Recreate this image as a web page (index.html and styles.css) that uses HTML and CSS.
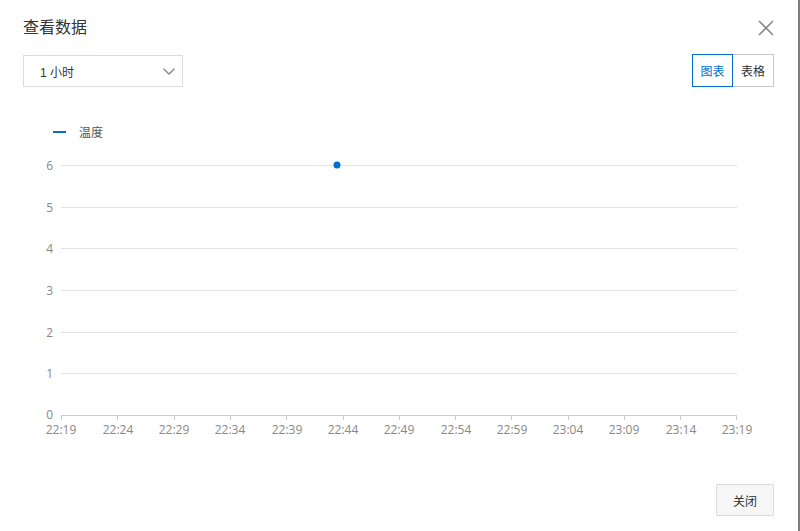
FILE: index.html
```html
<!DOCTYPE html>
<html lang="zh-CN">
<head>
<meta charset="utf-8">
<title>查看数据</title>
<link rel="stylesheet" href="styles.css">
</head>
<body>
<div class="dialog">
  <div class="header">
    <h1 class="title">查看数据</h1>
    <button class="close" aria-label="关闭">
      <svg width="16" height="16" viewBox="0 0 16 16"><path d="M1 1L15 15M15 1L1 15" stroke="#8a8a8a" stroke-width="1.6" fill="none"/></svg>
    </button>
  </div>
  <div class="toolbar">
    <div class="select">
      <span class="select-text">1 小时</span>
      <svg class="chev" width="12" height="7" viewBox="0 0 12 7"><path d="M0.5 0.8L6 6L11.5 0.8" stroke="#888" stroke-width="1.3" fill="none"/></svg>
    </div>
    <div class="toggle">
      <button class="tg active">图表</button>
      <button class="tg">表格</button>
    </div>
  </div>
  <div class="chart">
    <svg width="797" height="345" viewBox="0 0 797 345">
      <g class="legend">
        <line x1="53" y1="32" x2="66" y2="32" stroke="#0070cc" stroke-width="2"/>
        <text x="79" y="31" class="legend-text">温度</text>
      </g>
      <g class="grid" stroke="#e3e3e3" stroke-width="1">
        <line x1="61" y1="65.5" x2="737" y2="65.5"/>
        <line x1="61" y1="107.5" x2="737" y2="107.5"/>
        <line x1="61" y1="148.5" x2="737" y2="148.5"/>
        <line x1="61" y1="190.5" x2="737" y2="190.5"/>
        <line x1="61" y1="232.5" x2="737" y2="232.5"/>
        <line x1="61" y1="273.5" x2="737" y2="273.5"/>
      </g>
      <g class="ylabels">
        <text x="53" y="65">6</text>
        <text x="53" y="107">5</text>
        <text x="53" y="148">4</text>
        <text x="53" y="190">3</text>
        <text x="53" y="232">2</text>
        <text x="53" y="273">1</text>
        <text x="53" y="314">0</text>
      </g>
      <g class="axis" stroke="#cccccc" stroke-width="1">
        <line x1="61" y1="315.5" x2="737" y2="315.5"/>
        <line x1="61.5" y1="315" x2="61.5" y2="320"/>
        <line x1="117.5" y1="315" x2="117.5" y2="320"/>
        <line x1="174.5" y1="315" x2="174.5" y2="320"/>
        <line x1="230.5" y1="315" x2="230.5" y2="320"/>
        <line x1="286.5" y1="315" x2="286.5" y2="320"/>
        <line x1="343.5" y1="315" x2="343.5" y2="320"/>
        <line x1="399.5" y1="315" x2="399.5" y2="320"/>
        <line x1="455.5" y1="315" x2="455.5" y2="320"/>
        <line x1="511.5" y1="315" x2="511.5" y2="320"/>
        <line x1="568.5" y1="315" x2="568.5" y2="320"/>
        <line x1="624.5" y1="315" x2="624.5" y2="320"/>
        <line x1="680.5" y1="315" x2="680.5" y2="320"/>
        <line x1="736.5" y1="315" x2="736.5" y2="320"/>
      </g>
      <g class="xlabels">
        <text x="61" y="329">22:19</text>
        <text x="118" y="329">22:24</text>
        <text x="174" y="329">22:29</text>
        <text x="230" y="329">22:34</text>
        <text x="287" y="329">22:39</text>
        <text x="343" y="329">22:44</text>
        <text x="399" y="329">22:49</text>
        <text x="456" y="329">22:54</text>
        <text x="512" y="329">22:59</text>
        <text x="568" y="329">23:04</text>
        <text x="624" y="329">23:09</text>
        <text x="681" y="329">23:14</text>
        <text x="737" y="329">23:19</text>
      </g>
      <circle cx="337" cy="65" r="3.5" fill="#0070cc"/>
    </svg>
  </div>
  <div class="footer">
    <button class="btn">关闭</button>
  </div>
</div>
</body>
</html>
```
FILE: styles.css
```css
html, body {
  margin: 0;
  padding: 0;
  background: #ffffff;
}
body {
  font-family: "Liberation Sans", "Noto Sans CJK SC", sans-serif;
  color: #333;
}
.dialog {
  width: 800px;
  height: 531px;
  box-sizing: border-box;
  border-right: 2px solid #7d7d7d;
  display: flex;
  flex-direction: column;
  background: #fff;
}
.header {
  display: flex;
  justify-content: space-between;
  align-items: center;
  padding: 13px 24px 0 23px;
  height: 26px;
}
.title {
  margin: 0;
  font-size: 16px;
  font-weight: normal;
  line-height: 24px;
  color: #333;
  font-family: "Noto Sans CJK SC", sans-serif;
}
.close {
  border: 0;
  background: none;
  padding: 0;
  width: 16px;
  height: 16px;
  margin-top: 3px;
  cursor: pointer;
}
.close svg { display: block; }
.toolbar {
  display: flex;
  justify-content: space-between;
  align-items: flex-start;
  padding: 16px 24px 0 23px;
}
.select {
  width: 160px;
  height: 32px;
  box-sizing: border-box;
  border: 1px solid #dcdcdc;
  display: flex;
  align-items: center;
  justify-content: space-between;
  padding: 0 7px 0 16px;
}
.select-text {
  font-size: 12px;
  color: #333;
  font-family: "Liberation Sans", "Noto Sans CJK SC", sans-serif;
}
.chev { display: block; }
.toggle {
  display: flex;
  margin-top: -1px;
}
.tg {
  width: 41px;
  height: 33px;
  box-sizing: border-box;
  border: 1px solid #c8c8c8;
  background: #fff;
  font-family: "Noto Sans CJK SC", sans-serif;
  font-size: 12px;
  color: #333;
  padding: 0;
  margin: 0;
}
.tg + .tg { border-left: 0; }
.tg.active {
  border-color: #0070cc;
  color: #0070cc;
}
.chart {
  margin-top: 13px;
}
.chart svg { display: block; }
.legend-text {
  font-family: "Noto Sans CJK SC", sans-serif;
  font-size: 12px;
  fill: #555;
  dominant-baseline: central;
}
.ylabels text {
  font-family: "Open Sans", "Liberation Sans", sans-serif;
  font-size: 12px;
  fill: #888;
  text-anchor: end;
  dominant-baseline: central;
}
.xlabels text {
  font-family: "Open Sans", "Liberation Sans", sans-serif;
  font-size: 12px;
  fill: #888;
  text-anchor: middle;
  dominant-baseline: central;
}
.footer {
  margin-top: auto;
  display: flex;
  justify-content: flex-end;
  padding: 0 24px 15px 0;
}
.btn {
  width: 58px;
  height: 32px;
  box-sizing: border-box;
  border: 1px solid #dcdcdc;
  background: #f7f7f7;
  font-family: "Noto Sans CJK SC", sans-serif;
  font-size: 12px;
  color: #333;
  padding: 0;
}
```
